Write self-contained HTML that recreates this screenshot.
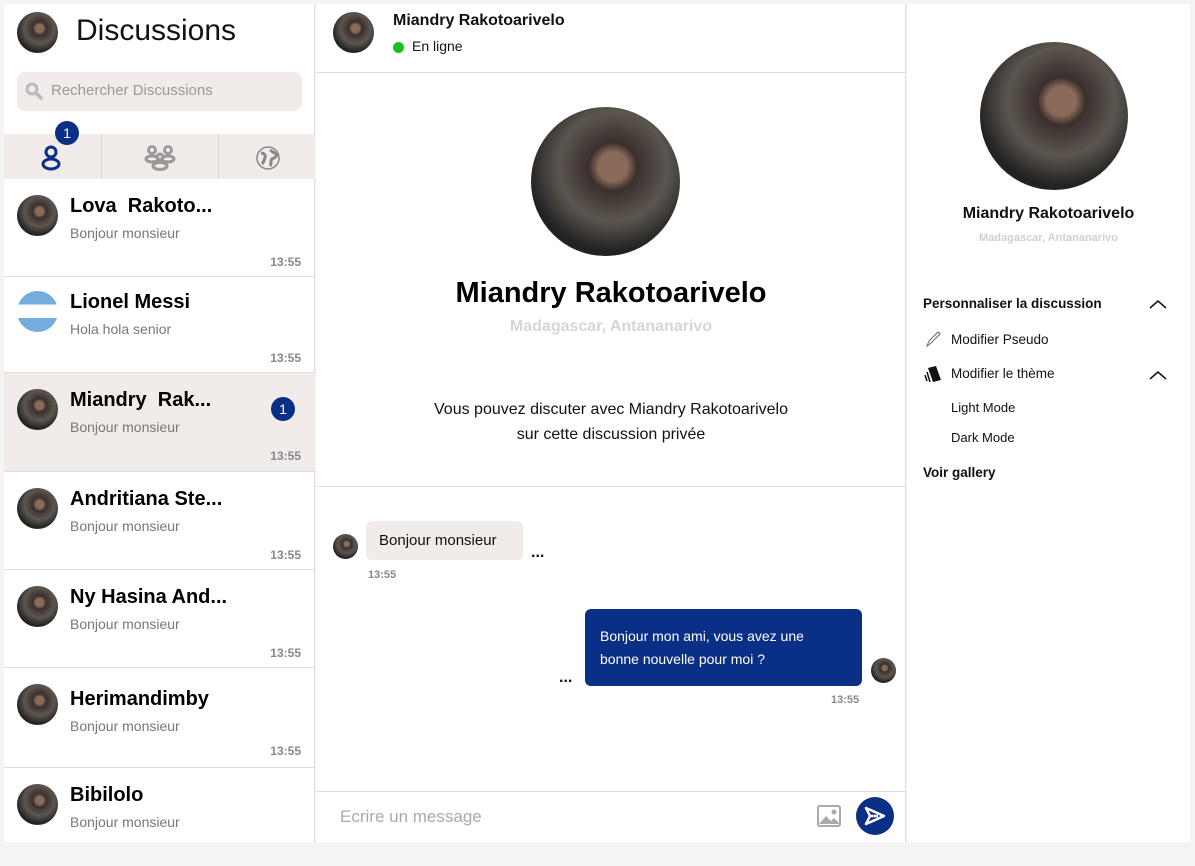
<!DOCTYPE html>
<html><head><meta charset="utf-8"><style>
*{box-sizing:border-box;margin:0;padding:0}
html,body{width:1195px;height:842px}
body{background:#f4f4f4;font-family:"Liberation Sans",sans-serif;position:relative;overflow:hidden;color:#111}
.av{position:absolute;border-radius:50%;background:radial-gradient(circle at 55% 40%,#8a6a5a 0 12%,#3a2f2c 20%,#5c5650 45%,#222 70%,#2e2a28)}
#left{position:absolute;left:4px;top:4px;width:311px;height:838px;background:#fff;border-right:1px solid #ddd}
#mid{position:absolute;left:316px;top:4px;width:590px;height:838px;background:#fff;border-right:1px solid #ddd}
#right{position:absolute;left:907px;top:4px;width:283px;height:838px;background:#fff}
.abs{position:absolute}
.item{position:absolute;left:0;width:311px;height:98px;border-bottom:1px solid #ddd}
.item .n{position:absolute;left:66px;top:16px;font-size:20px;font-weight:bold;color:#000}
.item .m{position:absolute;left:66px;top:46px;font-size:14px;color:#777}
.item .t{position:absolute;right:14px;top:76px;font-size:12px;font-weight:bold;color:#888}
.item .av{left:13px;top:16px;width:41px;height:41px}
.badge{position:absolute;width:24px;height:24px;border-radius:50%;background:#0a2f86;color:#fff;font-size:14px;text-align:center;line-height:24px}
</style></head><body>
<div id="left">
<div class="av" style="left:13px;top:8px;width:41px;height:41px"></div>
<div class="abs" style="left:72px;top:10px;font-size:30px;color:#111">Discussions</div>
<div class="abs" style="left:13px;top:68px;width:285px;height:39px;background:#f1ebea;border-radius:8px">
<svg class="abs" style="left:8px;top:10px" width="18" height="18" viewBox="0 0 18 18"><circle cx="7" cy="7" r="5" fill="none" stroke="#bbb" stroke-width="3"/><path d="M11 11l5 5" stroke="#bbb" stroke-width="3.5" stroke-linecap="round"/></svg>
<div class="abs" style="left:34px;top:10px;font-size:15px;color:#999">Rechercher Discussions</div></div>
<div class="abs" style="left:0;top:130px;width:311px;height:45px;background:#f1ebea"></div>
<div class="abs" style="left:97px;top:130px;width:1px;height:45px;background:#d8d2d1"></div>
<div class="abs" style="left:214px;top:130px;width:1px;height:45px;background:#d8d2d1"></div>
<svg class="abs" style="left:36px;top:140px" width="22" height="28" viewBox="0 0 22 28"><circle cx="11" cy="8" r="5" fill="none" stroke="#0a2f86" stroke-width="3"/><ellipse cx="11" cy="20" rx="8" ry="5" fill="none" stroke="#0a2f86" stroke-width="3"/></svg>
<div class="badge" style="left:51px;top:117px">1</div>
<svg class="abs" style="left:140px;top:140px" width="34" height="28" viewBox="0 0 34 28"><g fill="none" stroke="#999" stroke-width="3"><circle cx="8" cy="6" r="3.5"/><circle cx="24" cy="6" r="3.5"/><ellipse cx="8" cy="15" rx="6" ry="3"/><ellipse cx="24" cy="15" rx="6" ry="3"/><circle cx="16" cy="13" r="3"/><ellipse cx="16" cy="22" rx="7" ry="3.5"/></g></svg>
<svg class="abs" style="left:251px;top:141px" width="26" height="26" viewBox="0 0 26 26"><circle cx="13" cy="13" r="11" fill="none" stroke="#888" stroke-width="1.5"/><path d="M6 8c3 0 5 2 4 5s-2 5-3 6M15 5c2 2 4 2 6 4s-2 4-4 5 0 5-2 7" fill="none" stroke="#888" stroke-width="3"/></svg>
<div class="item" style="top:175px"><div class="av"></div><div class="n">Lova&nbsp; Rakoto...</div><div class="m">Bonjour monsieur</div><div class="t">13:55</div></div>
<div class="item" style="top:271px"><div class="av" style="background:linear-gradient(#74acdf 0 33%,#fff 33% 66%,#74acdf 66%)"></div><div class="n">Lionel Messi</div><div class="m">Hola hola senior</div><div class="t">13:55</div></div>
<div class="item" style="top:369px;height:99px;background:#f1ebea"><div class="av"></div><div class="n">Miandry&nbsp; Rak...</div><div class="m">Bonjour monsieur</div><div class="t">13:55</div><div class="badge" style="left:267px;top:24px">1</div></div>
<div class="item" style="top:468px"><div class="av"></div><div class="n">Andritiana Ste...</div><div class="m">Bonjour monsieur</div><div class="t">13:55</div></div>
<div class="item" style="top:566px"><div class="av"></div><div class="n">Ny Hasina And...</div><div class="m">Bonjour monsieur</div><div class="t">13:55</div></div>
<div class="item" style="top:664px;height:100px"><div class="av"></div><div class="n" style="top:20px">Herimandimby</div><div class="m" style="top:50px">Bonjour monsieur</div><div class="t">13:55</div></div>
<div class="item" style="top:764px;border:none"><div class="av"></div><div class="n">Bibilolo</div><div class="m">Bonjour monsieur</div></div>
</div>
<div id="mid">
<div class="av" style="left:17px;top:8px;width:41px;height:41px"></div>
<div class="abs" style="left:77px;top:8px;font-size:16px;font-weight:bold">Miandry Rakotoarivelo</div>
<div class="abs" style="left:77px;top:38px;width:11px;height:11px;border-radius:50%;background:#19c022"></div>
<div class="abs" style="left:96px;top:34px;font-size:14px">En ligne</div>
<div class="abs" style="left:0;top:68px;width:590px;height:1px;background:#ddd"></div>
<div class="av" style="left:215px;top:103px;width:149px;height:149px"></div>
<div class="abs" style="left:0;top:273px;width:590px;text-align:center;font-size:29px;font-weight:bold;color:#000">Miandry Rakotoarivelo</div>
<div class="abs" style="left:0;top:314px;width:590px;text-align:center;font-size:16px;font-weight:bold;color:#d6d6d6">Madagascar, Antananarivo</div>
<div class="abs" style="left:0;top:393px;width:590px;text-align:center;font-size:16px;line-height:25px">Vous pouvez discuter avec Miandry Rakotoarivelo<br>sur cette discussion privée</div>
<div class="abs" style="left:0;top:482px;width:590px;height:1px;background:#ddd"></div>
<div class="av" style="left:17px;top:530px;width:25px;height:25px"></div>
<div class="abs" style="left:50px;top:517px;width:157px;height:39px;background:#f1ebea;border-radius:6px;padding:11px 13px;font-size:15px">Bonjour monsieur</div>
<div class="abs" style="left:215px;top:540px;font-size:16px;font-weight:bold">...</div>
<div class="abs" style="left:52px;top:565px;font-size:11px;font-weight:bold;color:#888">13:55</div>
<div class="abs" style="left:269px;top:605px;width:277px;height:77px;background:#0a2f86;border-radius:6px;padding:16px 15px;font-size:14px;line-height:23px;color:#fff">Bonjour mon ami, vous avez une<br>bonne nouvelle pour moi ?</div>
<div class="abs" style="left:243px;top:665px;font-size:16px;font-weight:bold">...</div>
<div class="av" style="left:555px;top:654px;width:25px;height:25px"></div>
<div class="abs" style="left:515px;top:690px;font-size:11px;font-weight:bold;color:#888">13:55</div>
<div class="abs" style="left:0;top:787px;width:590px;height:1px;background:#ddd"></div>
<div class="abs" style="left:24px;top:803px;font-size:17px;color:#aaa">Ecrire un message</div>
<svg class="abs" style="left:500px;top:799px" width="26" height="26" viewBox="0 0 26 26"><rect x="2" y="3" width="22" height="20" rx="2" fill="none" stroke="#aaa" stroke-width="2"/><path d="M3 21l7-8 5 5 3-3 6 6z" fill="#aaa"/><circle cx="18" cy="9" r="2.5" fill="#aaa"/></svg>
<div class="abs" style="left:540px;top:793px;width:38px;height:38px;border-radius:50%;background:#0a2f86"></div>
<svg class="abs" style="left:548px;top:802px" width="22" height="20" viewBox="0 0 22 20"><path d="M2 2l18 8-18 8 4-8z" fill="none" stroke="#fff" stroke-width="2.5" stroke-linejoin="round"/><path d="M6 10h8" stroke="#fff" stroke-width="2.5"/></svg>
</div>
<div id="right">
<div class="av" style="left:73px;top:38px;width:148px;height:148px"></div>
<div class="abs" style="left:0;top:201px;width:283px;text-align:center;font-size:16px;font-weight:bold">Miandry Rakotoarivelo</div>
<div class="abs" style="left:0;top:228px;width:283px;text-align:center;font-size:11px;font-weight:bold;color:#d0d0d0">Madagascar, Antananarivo</div>
<div class="abs" style="left:16px;top:292px;font-size:13.5px;font-weight:bold">Personnaliser la discussion</div>
<svg class="abs" style="left:242px;top:295px" width="18" height="10"><path d="M1 9l8-7 8 7" fill="none" stroke="#111" stroke-width="1.5"/></svg>
<svg class="abs" style="left:18px;top:326px" width="16" height="18"><path d="M2 16l2-5 9-9 2 2-9 9z" fill="none" stroke="#666" stroke-width="1"/></svg>
<div class="abs" style="left:44px;top:328px;font-size:13.5px">Modifier Pseudo</div>
<svg class="abs" style="left:16px;top:361px" width="20" height="18"><path d="M5 3l8-2 5 14-8 2z" fill="#111"/><path d="M2 10l2 6M4 7l3 10" stroke="#111" stroke-width="1.5"/></svg>
<div class="abs" style="left:44px;top:362px;font-size:13.5px">Modifier le thème</div>
<svg class="abs" style="left:242px;top:366px" width="18" height="10"><path d="M1 9l8-7 8 7" fill="none" stroke="#111" stroke-width="1.5"/></svg>
<div class="abs" style="left:44px;top:396px;font-size:13px">Light Mode</div>
<div class="abs" style="left:44px;top:426px;font-size:13px">Dark Mode</div>
<div class="abs" style="left:16px;top:461px;font-size:13.5px;font-weight:bold">Voir gallery</div>
</div>
</body></html>
